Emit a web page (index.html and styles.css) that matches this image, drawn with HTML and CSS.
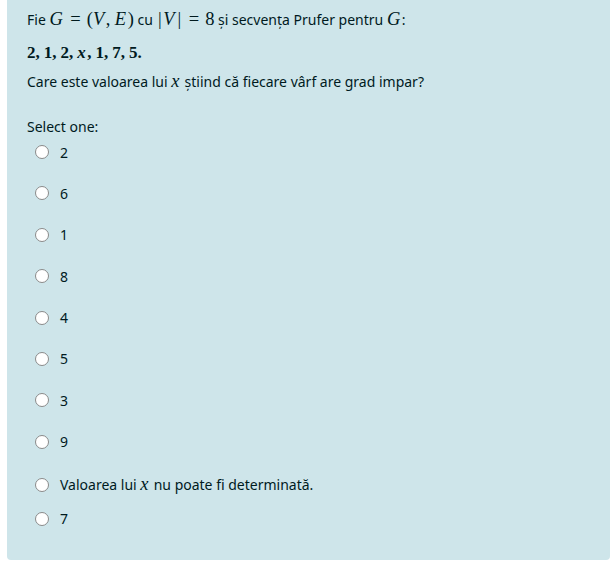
FILE: index.html
```html
<!DOCTYPE html>
<html lang="ro">
<head>
<meta charset="utf-8">
<link rel="stylesheet" href="styles.css">
</head>
<body>
<div class="panel">
  <p class="q l1">Fie <span class="m"><i>G</i><span class="rel">=</span>(<i>V</i>,<span class="th"></span><i>E</i>)</span> cu <span class="m"><span class="bar">|</span><i>V</i><span class="bar">|</span><span class="rel">=</span>8</span> și secvența Prufer pentru <span class="m"><i>G</i></span>:</p>
  <p class="q l2"><span class="m b">2,<span class="th"></span>1,<span class="th"></span>2,<span class="th"></span><i>x</i>,<span class="th"></span>1,<span class="th"></span>7,<span class="th"></span>5.</span></p>
  <p class="q l3">Care este valoarea lui <span class="m"><i>x</i></span> știind că fiecare vârf are grad impar?</p>
  <div class="prompt">Select one:</div>
  <div class="answers">
    <label class="opt"><span class="radio"></span><span>2</span></label>
    <label class="opt"><span class="radio"></span><span>6</span></label>
    <label class="opt"><span class="radio"></span><span>1</span></label>
    <label class="opt"><span class="radio"></span><span>8</span></label>
    <label class="opt"><span class="radio"></span><span>4</span></label>
    <label class="opt"><span class="radio"></span><span>5</span></label>
    <label class="opt"><span class="radio"></span><span>3</span></label>
    <label class="opt"><span class="radio"></span><span>9</span></label>
    <label class="opt long"><span class="radio"></span><span>Valoarea lui <span class="m"><i>x</i></span> nu poate fi determinată.</span></label>
    <label class="opt last"><span class="radio"></span><span>7</span></label>
  </div>
</div>
</body>
</html>
```
FILE: styles.css
```css
html, body {
  margin: 0;
  padding: 0;
  background: #ffffff;
}
body {
  font-family: "Noto Sans", "Open Sans", sans-serif;
  font-size: 14px;
  color: #001a1e;
  overflow: hidden;
}
.panel {
  margin-left: 7px;
  height: 560px;
  background: #cee5ea;
  border-radius: 0 0 4px 4px;
  padding: 9px 0 0 20px;
  box-sizing: border-box;
}
.q {
  margin: 0;
  line-height: 20px;
}
.l2 {
  margin-top: 13px;
}
.l3 {
  margin-top: 8px;
}
.m {
  font-family: "Liberation Serif", "DejaVu Serif", serif;
  font-size: 18.5px;
}
.m i {
  font-family: "Liberation Serif", "DejaVu Serif", serif;
  font-style: italic;
  padding-right: 1.5px;
}
.m.b {
  font-weight: bold;
  font-size: 17px;
}
.m.b .th {
  width: 4px;
}
.rel {
  margin: 0 6px;
}
.bar {
  padding: 0 1.5px;
}
.th {
  display: inline-block;
  width: 4.5px;
}
.prompt {
  margin-top: 25px;
  line-height: 20px;
}
.answers {
  display: flex;
  flex-direction: column;
  padding-left: 8px;
  margin-top: 5px;
}
.opt {
  display: flex;
  align-items: center;
  height: 20px;
  margin-bottom: 21.4px;
  gap: 11px;
}
.opt.long {
  margin-top: 1.6px;
  margin-bottom: 14px;
}
.radio {
  width: 12px;
  height: 12px;
  border: 1px solid #8a8a8a;
  border-radius: 50%;
  background: #ffffff;
  flex: none;
}
```
